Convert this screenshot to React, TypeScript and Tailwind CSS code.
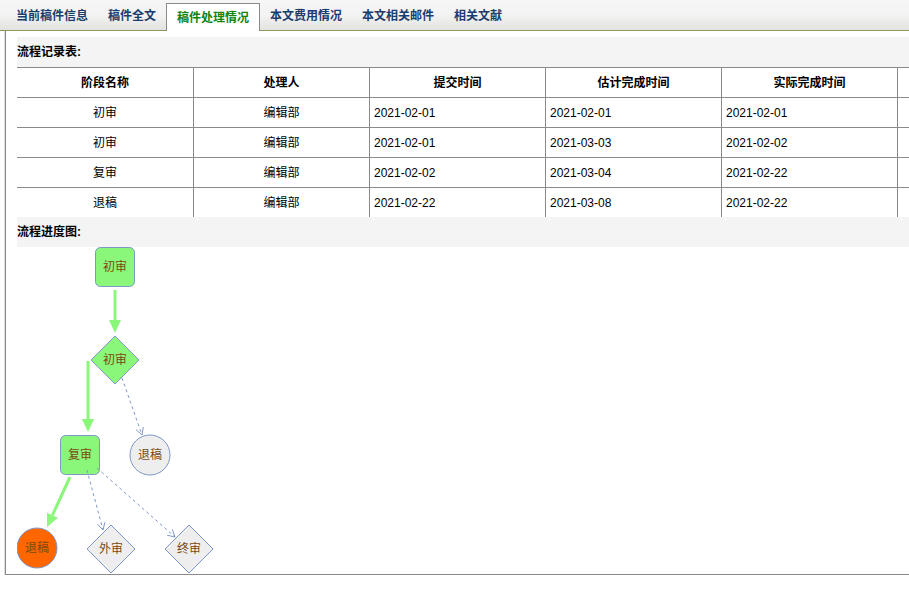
import React from 'react'

const tabs = ['当前稿件信息', '稿件全文', '稿件处理情况', '本文费用情况', '本文相关邮件', '相关文献']

const rows = [
  ['初审', '编辑部', '2021-02-01', '2021-02-01', '2021-02-01'],
  ['初审', '编辑部', '2021-02-01', '2021-03-03', '2021-02-02'],
  ['复审', '编辑部', '2021-02-02', '2021-03-04', '2021-02-22'],
  ['退稿', '编辑部', '2021-02-22', '2021-03-08', '2021-02-22'],
]

const heads = ['阶段名称', '处理人', '提交时间', '估计完成时间', '实际完成时间', '']

const GREEN = '#8af67a'
const STROKE = '#7f97c8'
const LABEL = '#7a4a10'

function Label({ x, y, children }: { x: number; y: number; children: string }) {
  return (
    <text x={x} y={y + 4} textAnchor="middle" fontSize="12" fill={LABEL} fontFamily="'Noto Sans CJK SC', sans-serif">
      {children}
    </text>
  )
}

function Diamond({ cx, cy, fill, label }: { cx: number; cy: number; fill: string; label: string }) {
  return (
    <g>
      <polygon points={`${cx},${cy - 24} ${cx + 24},${cy} ${cx},${cy + 24} ${cx - 24},${cy}`} fill={fill} stroke={STROKE} strokeWidth="1" />
      <Label x={cx} y={cy}>{label}</Label>
    </g>
  )
}

function Dashed({ x1, y1, x2, y2 }: { x1: number; y1: number; x2: number; y2: number }) {
  const a = Math.atan2(y2 - y1, x2 - x1)
  const l = 8
  const p1 = [x2 - l * Math.cos(a - 0.5), y2 - l * Math.sin(a - 0.5)]
  const p2 = [x2 - l * Math.cos(a + 0.5), y2 - l * Math.sin(a + 0.5)]
  return (
    <g stroke={STROKE} strokeWidth="1" fill="none">
      <line x1={x1} y1={y1} x2={x2} y2={y2} strokeDasharray="3 3" />
      <polyline points={`${p1[0]},${p1[1]} ${x2},${y2} ${p2[0]},${p2[1]}`} />
    </g>
  )
}

function Arrow({ x1, y1, x2, y2 }: { x1: number; y1: number; x2: number; y2: number }) {
  const a = Math.atan2(y2 - y1, x2 - x1)
  const l = 13
  const w = 6
  const bx = x2 - l * Math.cos(a)
  const by = y2 - l * Math.sin(a)
  const nx = -Math.sin(a) * w
  const ny = Math.cos(a) * w
  return (
    <g>
      <line x1={x1} y1={y1} x2={bx} y2={by} stroke={GREEN} strokeWidth="3" />
      <polygon points={`${bx + nx},${by + ny} ${x2},${y2} ${bx - nx},${by - ny}`} fill={GREEN} />
    </g>
  )
}

function FlowChart() {
  return (
    <svg width="240" height="327" viewBox="0 0 240 327" className="block">
      <rect x="78.5" y="0.5" width="39" height="39" rx="5" fill={GREEN} stroke={STROKE} />
      <Label x={98} y={20}>初审</Label>
      <Arrow x1={98} y1={43} x2={98} y2={86} />
      <Diamond cx={98} cy={113} fill={GREEN} label="初审" />
      <Arrow x1={71} y1={114} x2={71} y2={185} />
      <Dashed x1={105} y1={131} x2={125} y2={188} />
      <rect x="43.5" y="188.5" width="39" height="39" rx="5" fill={GREEN} stroke={STROKE} />
      <Label x={63} y={208}>复审</Label>
      <circle cx="133" cy="208" r="20" fill="#eeeeee" stroke={STROKE} />
      <Label x={133} y={208}>退稿</Label>
      <Arrow x1={53} y1={230} x2={30} y2={280} />
      <Dashed x1={70} y1={223} x2={86} y2={283} />
      <Dashed x1={80} y1={221} x2={158} y2={290} />
      <circle cx="20" cy="301" r="20" fill="#ff6600" stroke={STROKE} />
      <Label x={20} y={301}>退稿</Label>
      <Diamond cx={94} cy={302} fill="#eeeeee" label="外审" />
      <Diamond cx={172} cy={302} fill="#eeeeee" label="终审" />
    </svg>
  )
}

export default function App() {
  return (
    <div
      className="w-[909px] h-[594px] bg-white overflow-hidden text-[12px] text-black"
      style={{ fontFamily: "'Liberation Sans', 'Noto Sans CJK SC', sans-serif" }}
    >
      <div className="h-[31px] flex items-end pl-[6px] border-b border-[#8d9a5e] bg-gradient-to-b from-[#f6f6f6] via-[#f3f3f3] to-[#e2e2de]">
        {tabs.map((t, i) =>
          i === 2 ? (
            <div key={t} className="h-[28px] -mb-px px-[10px] border border-b-0 border-[#8a8a8a] bg-white flex items-center font-bold text-[#118411]">
              {t}
            </div>
          ) : (
            <div key={t} className="h-[28px] px-[10px] flex items-center font-bold text-[#1b3d6e]">
              {t}
            </div>
          )
        )}
      </div>
      <div className="ml-[4px] border-l border-[#dedede]">
        <div className="h-[544px] border-l border-b border-[#8a8a8a] pl-[11px] pt-[6px] overflow-hidden">
          <div className="h-[30px] bg-[#f4f4f4] flex items-center font-bold">流程记录表:</div>
          <div className="border-t border-[#8a8a8a] w-[1056px]">
            <div className="flex h-[29px] font-bold">
              {heads.map((h, i) => (
                <div key={i} className={`w-[176px] shrink-0 flex items-center justify-center ${i > 0 ? 'border-l border-[#8a8a8a]' : ''}`}>
                  {h}
                </div>
              ))}
            </div>
            {rows.map((r, ri) => (
              <div key={ri} className="flex h-[30px] border-t border-[#8a8a8a]">
                {[...r, ''].map((c, i) => (
                  <div
                    key={i}
                    className={`w-[176px] shrink-0 flex items-center ${i < 2 ? 'justify-center' : 'pl-[4px]'} ${i > 0 ? 'border-l border-[#8a8a8a]' : ''}`}
                  >
                    {c}
                  </div>
                ))}
              </div>
            ))}
          </div>
          <div className="h-[30px] bg-[#f4f4f4] flex items-center font-bold">流程进度图:</div>
          <FlowChart />
        </div>
      </div>
    </div>
  )
}
